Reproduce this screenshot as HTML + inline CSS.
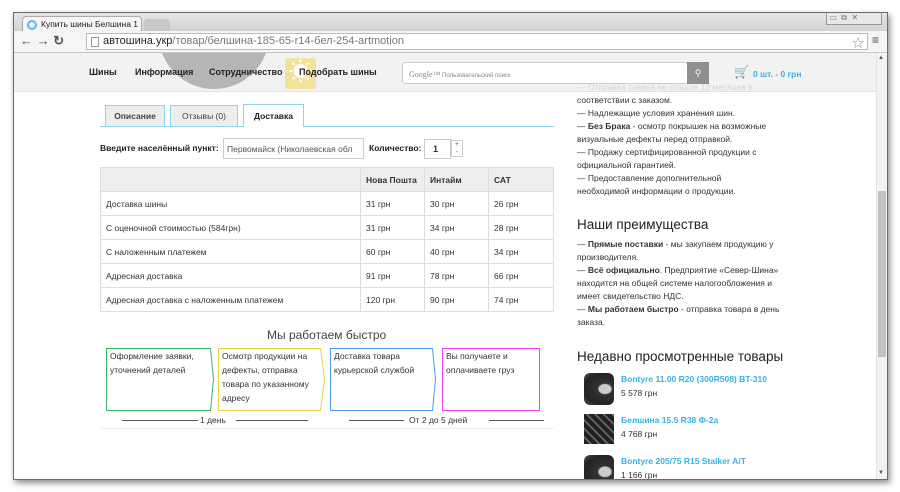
<!DOCTYPE html>
<html><head><meta charset="utf-8"><style>
*{box-sizing:border-box;margin:0;padding:0}
body{width:900px;height:492px;background:#fff;position:relative;overflow:hidden;font-family:"Liberation Sans","Noto Sans CJK SC",sans-serif;font-size:9px;color:#333}
.a{position:absolute}
#win{left:13px;top:12px;width:875px;height:468px;border:1px solid #6b6b6b;background:#fff;box-shadow:2px 3px 6px rgba(0,0,0,.45);overflow:hidden}
#title{left:0;top:0;width:873px;height:18px;background:linear-gradient(#e6e6e6,#d2d2d2)}
#tab{left:8px;top:3px;width:120px;height:16px;background:#f5f5f5;border:1px solid #aaa;border-bottom:none;border-radius:4px 4px 0 0;font-size:8.5px;padding:2px 0 0 18px;color:#222}
#toolbar{left:0;top:18px;width:873px;height:22px;background:#f5f5f5;border-bottom:1px solid #c8c8c8}
#url{left:72px;top:2px;width:782px;height:17px;background:#fff;border:1px solid #bbb;font-size:11px;padding:1px 0 0 16px;color:#777}
td,th{border:1px solid #ddd;padding:0 5px;height:24px;font-size:8.5px;text-align:left;vertical-align:middle}
th{background:#eee;font-weight:bold}
.side{font-size:8.5px;line-height:13px;color:#333;white-space:nowrap}
.h{font-size:13.5px;color:#222}
.box{position:absolute;top:349px;height:63px;font-size:8.5px;line-height:14px;padding:1px 3px;color:#333}
.lnk{color:#3ab0e2;font-weight:bold;font-size:8.5px}
</style></head><body>
<div id="win" class="a">
 <div id="title" class="a">
  <div id="tab" class="a"><span class="a" style="left:4px;top:3px;width:10px;height:10px;border:2px solid #5bb8e8;border-radius:50%"></span>Купить шины Белшина 1 <span style="margin-left:6px">×</span></div>
  <div class="a" style="left:130px;top:6px;width:26px;height:12px;background:#c8c8c8;border-radius:3px 3px 0 0"></div>
  <div class="a" style="left:812px;top:0;width:56px;height:12px;border:1px solid #999;border-top:none;background:#e8e8e8;font-size:8px;color:#777">&nbsp;▭ &nbsp;⧉ &nbsp;✕</div>
 </div>
 <div id="toolbar" class="a">
  <div class="a" style="left:6px;top:2px;font-size:13px;color:#555;font-weight:bold">← → ↻</div>
  <div id="url" class="a"><span class="a" style="left:4px;top:3px;width:8px;height:10px;border:1px solid #999"></span><span style="color:#222">автошина.укр</span>/товар/белшина-185-65-r14-бел-254-artmotion</div>
  <div class="a" style="left:838px;top:3px;font-size:12px;color:#888">☆</div>
  <div class="a" style="left:858px;top:2px;font-size:12px;color:#444">≡</div>
 </div>
 <div class="a" style="left:0;top:40px;width:862px;height:427px;background:#fff;overflow:hidden">
  <div class="a side" style="left:563px;top:28px">— Отправка товара не старше 12 месяцев в<br>соответствии с заказом.<br>— Надлежащие условия хранения шин.<br>— <b>Без Брака</b> - осмотр покрышек на возможные<br>визуальные дефекты перед отправкой.<br>— Продажу сертифицированной продукции с<br>официальной гарантией.<br>— Предоставление дополнительной<br>необходимой информации о продукции.</div>
  <div class="a h" style="left:563px;top:164px">Наши преимущества</div>
  <div class="a side" style="left:563px;top:185px">— <b>Прямые поставки</b> - мы закупаем продукцию у<br>производителя.<br>— <b>Всё официально</b>. Предприятие «Север-Шина»<br>находится на общей системе налогообложения и<br>имеет свидетельство НДС.<br>— <b>Мы работаем быстро</b> - отправка товара в день<br>заказа.</div>
  <div class="a h" style="left:563px;top:296px">Недавно просмотренные товары</div>
  <div class="a" style="left:570px;top:320px;width:30px;height:32px;background:radial-gradient(ellipse at 70% 50%,#ccc 20%,#333 25%,#222 70%,#555);border-radius:6px"></div>
  <div class="a lnk" style="left:607px;top:321px">Bontyre 11.00 R20 (300R508) BT-310</div><div class="a side" style="left:607px;top:334px">5 578 грн</div>
  <div class="a" style="left:570px;top:361px;width:30px;height:30px;background:repeating-linear-gradient(45deg,#222 0 4px,#666 4px 6px)"></div>
  <div class="a lnk" style="left:607px;top:362px">Белшина 15.5 R38 Ф-2а</div><div class="a side" style="left:607px;top:375px">4 768 грн</div>
  <div class="a" style="left:570px;top:402px;width:30px;height:28px;background:radial-gradient(ellipse at 70% 60%,#ccc 20%,#333 25%,#222 70%,#555);border-radius:6px"></div>
  <div class="a lnk" style="left:607px;top:403px">Bontyre 205/75 R15 Stalker A/T</div><div class="a side" style="left:607px;top:416px">1 166 грн</div>
  <div class="a" style="left:0;top:0;width:862px;height:39px;background:rgba(240,240,240,.85);border-bottom:1px solid #e2e2e2"></div>
  <div class="a" style="left:145px;top:-72px;width:110px;height:108px;border-radius:50%;background:#777;opacity:.5"></div>
  <div class="a" style="left:271px;top:5px;width:31px;height:31px;background:#f2e29a;border-radius:3px;color:#fff;font-size:24px;text-align:center;line-height:30px">☀</div>
  <div class="a" style="left:75px;top:14px;font-size:9px;font-weight:bold;color:#222">Шины</div>
  <div class="a" style="left:121px;top:14px;font-size:9px;font-weight:bold;color:#222">Информация</div>
  <div class="a" style="left:195px;top:14px;font-size:9px;font-weight:bold;color:#222">Сотрудничество</div>
  <div class="a" style="left:285px;top:14px;font-size:9px;font-weight:bold;color:#222">Подобрать шины</div>
  <div class="a" style="left:388px;top:9px;width:286px;height:22px;background:#fff;border:1px solid #ccc;border-radius:3px;font-size:6px;color:#888;padding:7px 0 0 6px"><span style="font-family:'Liberation Serif';font-size:8px">Google™</span> Пользовательский поиск</div>
  <div class="a" style="left:673px;top:9px;width:22px;height:22px;background:#8f8f8f;color:#fff;text-align:center;line-height:22px;font-size:9px">⚲</div>
  <div class="a" style="left:720px;top:12px;font-size:12px;color:#222">🛒</div>
  <div class="a" style="left:739px;top:16px;font-size:8.5px;font-weight:bold;color:#3ab0e2">0 шт. - 0 грн</div>
  <div class="a" style="left:86px;top:73px;width:454px;height:1px;background:#8fd3ee"></div>
  <div class="a" style="left:91px;top:52px;width:60px;height:21px;background:#eee;border:1px solid #8fd3ee;border-bottom:none;font-size:8.5px;font-weight:bold;color:#444;text-align:center;line-height:21px">Описание</div>
  <div class="a" style="left:156px;top:52px;width:68px;height:21px;background:#eee;border:1px solid #8fd3ee;border-bottom:none;font-size:8.5px;color:#444;text-align:center;line-height:21px">Отзывы (0)</div>
  <div class="a" style="left:229px;top:51px;width:61px;height:23px;background:#fff;border:1px solid #8fd3ee;border-bottom:none;font-size:8.5px;font-weight:bold;color:#222;text-align:center;line-height:22px">Доставка</div>
  <div class="a" style="left:86px;top:90px;font-size:8.5px;font-weight:bold;color:#222">Введите населённый пункт:</div>
  <div class="a" style="left:209px;top:85px;width:141px;height:21px;border:1px solid #ccc;font-size:8.5px;color:#555;padding:5px 3px;overflow:hidden;white-space:nowrap">Первомайск (Николаевская обл</div>
  <div class="a" style="left:355px;top:90px;font-size:8.5px;font-weight:bold;color:#222">Количество:</div>
  <div class="a" style="left:410px;top:86px;width:27px;height:20px;border:1px solid #ccc;font-size:9px;font-weight:bold;padding:4px 0 0 8px">1</div>
  <div class="a" style="left:437px;top:87px;width:12px;height:17px;border:1px solid #ccc;font-size:7px;color:#666;text-align:center;line-height:8px">+<br>-</div>
  <table class="a" style="left:86px;top:114px;width:454px;border-collapse:collapse;color:#333">
   <tr><th style="width:260px"></th><th style="width:64px">Нова Пошта</th><th style="width:64px">Интайм</th><th>САТ</th></tr>
   <tr><td>Доставка шины</td><td>31 грн</td><td>30 грн</td><td>26 грн</td></tr>
   <tr><td>С оценочной стоимостью (584грн)</td><td>31 грн</td><td>34 грн</td><td>28 грн</td></tr>
   <tr><td>С наложенным платежем</td><td>60 грн</td><td>40 грн</td><td>34 грн</td></tr>
   <tr><td>Адресная доставка</td><td>91 грн</td><td>78 грн</td><td>66 грн</td></tr>
   <tr><td>Адресная доставка с наложенным платежем</td><td>120 грн</td><td>90 грн</td><td>74 грн</td></tr>
  </table>
  <div class="a" style="left:86px;top:375px;width:454px;height:1px;background:#eee"></div>
  <div class="a" style="left:253px;top:275px;font-size:12px;color:#444">Мы работаем быстро</div>
  <div class="a" style="left:108px;top:367px;width:76px;height:1px;background:#555"></div>
  <div class="a" style="left:186px;top:362px;font-size:8.5px;color:#333">1 день</div>
  <div class="a" style="left:222px;top:367px;width:72px;height:1px;background:#555"></div>
  <div class="a" style="left:335px;top:367px;width:55px;height:1px;background:#555"></div>
  <div class="a" style="left:395px;top:362px;font-size:8.5px;color:#333">От 2 до 5 дней</div>
  <div class="a" style="left:475px;top:367px;width:55px;height:1px;background:#555"></div>
 </div>
 <svg class="a" style="left:0;top:0" width="873" height="467">
  <polygon points="92.5,335.5 196.5,335.5 199.5,366 196.5,397.5 92.5,397.5" fill="none" stroke="#3ab36a"/>
  <polygon points="204.5,335.5 306.5,335.5 310.5,366 306.5,397.5 204.5,397.5" fill="none" stroke="#e8d24a"/>
  <polygon points="316.5,335.5 418.5,335.5 421.5,366 418.5,397.5 316.5,397.5" fill="none" stroke="#4a9ef0"/>
  <rect x="428.5" y="335.5" width="97" height="62" fill="none" stroke="#f040e8"/>
 </svg>
 <div class="box" style="left:93px;top:335px;width:100px">Оформление заявки, уточнений деталей</div>
 <div class="box" style="left:205px;top:335px;width:100px">Осмотр продукции на дефекты, отправка товара по указанному адресу</div>
 <div class="box" style="left:317px;top:335px;width:100px">Доставка товара курьерской службой</div>
 <div class="box" style="left:429px;top:335px;width:95px">Вы получаете и оплачиваете груз</div>
 <div class="a" style="left:862px;top:40px;width:11px;height:427px;background:#f2f2f2;border-left:1px solid #e4e4e4"></div>
 <div class="a" style="left:864px;top:178px;width:8px;height:166px;background:#c2c2c2"></div>
 <div class="a" style="left:864px;top:42px;font-size:6px;color:#555">▲</div>
 <div class="a" style="left:864px;top:457px;font-size:6px;color:#555">▼</div>
</div>
</body></html>
